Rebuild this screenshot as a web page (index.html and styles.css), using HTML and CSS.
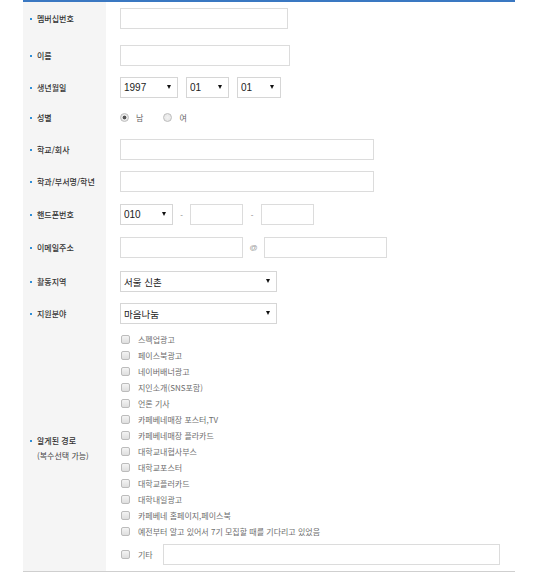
FILE: index.html
```html
<!DOCTYPE html>
<html lang="ko">
<head>
<meta charset="utf-8">
<title>신청서</title>
<link rel="stylesheet" href="styles.css">
</head>
<body>
<div class="form">
  <div class="lbl"><span class="dot"></span>멤버십번호</div>
  <div class="val"><input class="txt w168" type="text"></div>

  <div class="lbl"><span class="dot"></span>이름</div>
  <div class="val"><input class="txt w170" type="text"></div>

  <div class="lbl"><span class="dot"></span>생년월일</div>
  <div class="val gap8">
    <div class="sel w58"><select class="num"><option>1997</option></select></div>
    <div class="sel w43"><select class="num"><option>01</option></select></div>
    <div class="sel w44"><select class="num"><option>01</option></select></div>
  </div>

  <div class="lbl"><span class="dot"></span>성별</div>
  <div class="val">
    <label class="radio"><input type="radio" name="sex" checked><span>남</span></label>
    <label class="radio"><input type="radio" name="sex"><span>여</span></label>
  </div>

  <div class="lbl"><span class="dot"></span>학교/회사</div>
  <div class="val"><input class="txt w254" type="text"></div>

  <div class="lbl"><span class="dot"></span>학과/부서명/학년</div>
  <div class="val"><input class="txt w254" type="text"></div>

  <div class="lbl"><span class="dot"></span>핸드폰번호</div>
  <div class="val">
    <div class="sel w53"><select class="num"><option>010</option></select></div>
    <span class="sep w17">-</span>
    <input class="txt w53" type="text">
    <span class="sep w18">-</span>
    <input class="txt w53" type="text">
  </div>

  <div class="lbl"><span class="dot"></span>이메일주소</div>
  <div class="val">
    <input class="txt w123" type="text">
    <span class="sep w21 at">@</span>
    <input class="txt w123" type="text">
  </div>

  <div class="lbl"><span class="dot"></span>활동지역</div>
  <div class="val"><div class="sel w157"><select class="kr"><option>서울 신촌</option></select></div></div>

  <div class="lbl"><span class="dot"></span>지원분야</div>
  <div class="val"><div class="sel w157"><select class="kr"><option>마음나눔</option></select></div></div>

  <div class="lbl last"><span class="dot"></span><span class="multi">알게된 경로<br><span class="sub">(복수선택 가능)</span></span></div>
  <div class="val list">
    <label class="chk"><input type="checkbox"><span>스펙업광고</span></label>
    <label class="chk"><input type="checkbox"><span>페이스북광고</span></label>
    <label class="chk"><input type="checkbox"><span>네이버배너광고</span></label>
    <label class="chk"><input type="checkbox"><span>지인소개(SNS포함)</span></label>
    <label class="chk"><input type="checkbox"><span>언론 기사</span></label>
    <label class="chk"><input type="checkbox"><span>카페베네매장 포스터,TV</span></label>
    <label class="chk"><input type="checkbox"><span>카페베네매장 플라카드</span></label>
    <label class="chk"><input type="checkbox"><span>대학교내협사부스</span></label>
    <label class="chk"><input type="checkbox"><span>대학교포스터</span></label>
    <label class="chk"><input type="checkbox"><span>대학교플러카드</span></label>
    <label class="chk"><input type="checkbox"><span>대학내일광고</span></label>
    <label class="chk"><input type="checkbox"><span>카페베네 홈페이지,페이스북</span></label>
    <label class="chk"><input type="checkbox"><span>예전부터 알고 있어서 7기 모집할 때를 기다리고 있었음</span></label>
    <label class="chk etc"><input type="checkbox"><span>기타</span><input class="txt w337" type="text"></label>
  </div>
</div>
</body>
</html>
```

FILE: styles.css
```css
* { box-sizing: border-box; }
html, body { margin: 0; padding: 0; background: #fff; }
body {
  font-family: "Noto Sans CJK KR", "Noto Sans", sans-serif;
  font-size: 8px;
  color: #555;
}
.form {
  margin-left: 23px;
  width: 492px;
  border-top: 2px solid #3a78c2;
  border-bottom: 1px solid #cfcfcf;
  display: grid;
  grid-template-columns: 83px 1fr;
  grid-template-rows: 37px 32px 30px 32px 32px 33px 33px 34px 32px 28px auto;
}
.lbl {
  background: #f5f5f5;
  padding: 6px 0 0 7px;
  display: flex;
  align-items: flex-start;
  line-height: 21px;
  color: #333;
  font-weight: 500;
  white-space: nowrap;
}
.lbl .dot {
  display: inline-block;
  width: 2px;
  height: 2px;
  background: #2f8fd8;
  margin: 10px 5px 0 0;
  flex: none;
}
.lbl.last {
  padding-top: 0;
  align-items: center;
}
.lbl.last .dot { margin-top: 0; align-self: center; transform: translateY(-7px); }
.multi { line-height: 15px; }
.sub { color: #444; font-weight: 400; }
.val {
  padding: 6px 0 0 14px;
  display: flex;
  align-items: flex-start;
  height: 100%;
}
.gap8 { gap: 8px; }
.txt {
  height: 21px;
  border: 1px solid #dcdcdc;
  background: #fff;
  margin: 0;
  padding: 0 4px;
  font: inherit;
}
.w168 { width: 168px; }
.w170 { width: 170px; }
.w254 { width: 254px; }
.w53 { width: 53px; }
.w123 { width: 123px; }
.w337 { width: 337px; }
.sel {
  position: relative;
  height: 21px;
}
.sel select {
  appearance: none;
  -webkit-appearance: none;
  width: 100%;
  height: 21px;
  border: 1px solid #d6d6d6;
  border-radius: 0;
  background: #fff;
  margin: 0;
  padding: 0 0 0 3px;
  color: #222;
  outline: none;
}
.sel select.num {
  font-family: "Liberation Sans", Arial, sans-serif;
  font-size: 10px;
}
.sel select.kr {
  font-family: "Noto Sans CJK KR", sans-serif;
  font-size: 9.5px;
  color: #222;
}
.sel::after {
  content: "";
  position: absolute;
  right: 7px;
  top: 8px;
  border-left: 2.5px solid transparent;
  border-right: 2.5px solid transparent;
  border-top: 4px solid #111;
  pointer-events: none;
}
.w58 { width: 58px; }
.w43 { width: 43px; }
.w44 { width: 44px; }
.w157 { width: 157px; }
.sep {
  display: inline-block;
  text-align: center;
  line-height: 21px;
  color: #888;
  font-family: "Liberation Sans", Arial, sans-serif;
  font-size: 8px;
}
.sep.at { font-size: 8px; color: #999; }
.w17 { width: 17px; }
.w18 { width: 18px; }
.w21 { width: 21px; }
.radio {
  display: flex;
  align-items: center;
  height: 21px;
  margin-right: 20px;
  color: #666;
}
.radio input {
  appearance: none;
  -webkit-appearance: none;
  width: 9px;
  height: 9px;
  margin: 0 7px 0 0;
  border: 1px solid #bdbdbd;
  border-radius: 50%;
  background: radial-gradient(circle, #f2f2f2 0, #e2e2e2 100%);
  position: relative;
}
.radio input:checked {
  background: radial-gradient(circle, #555 0, #555 1.6px, #e8e8e8 2.2px, #e8e8e8 100%);
}
.list {
  flex-direction: column;
  padding-bottom: 6px;
}
.chk {
  display: flex;
  align-items: center;
  height: 16px;
  color: #6e6e6e;
  white-space: nowrap;
}
.chk input[type="checkbox"] {
  appearance: none;
  -webkit-appearance: none;
  width: 9px;
  height: 9px;
  margin: 0 8px 0 1px;
  border: 1px solid #bcbcbc;
  border-radius: 2px;
  background: linear-gradient(#f4f4f4, #dedede);
  flex: none;
}
.chk.etc {
  height: 21px;
  margin-top: 5px;
}
.chk.etc .txt { margin-left: 10px; width: 337px; }
```
